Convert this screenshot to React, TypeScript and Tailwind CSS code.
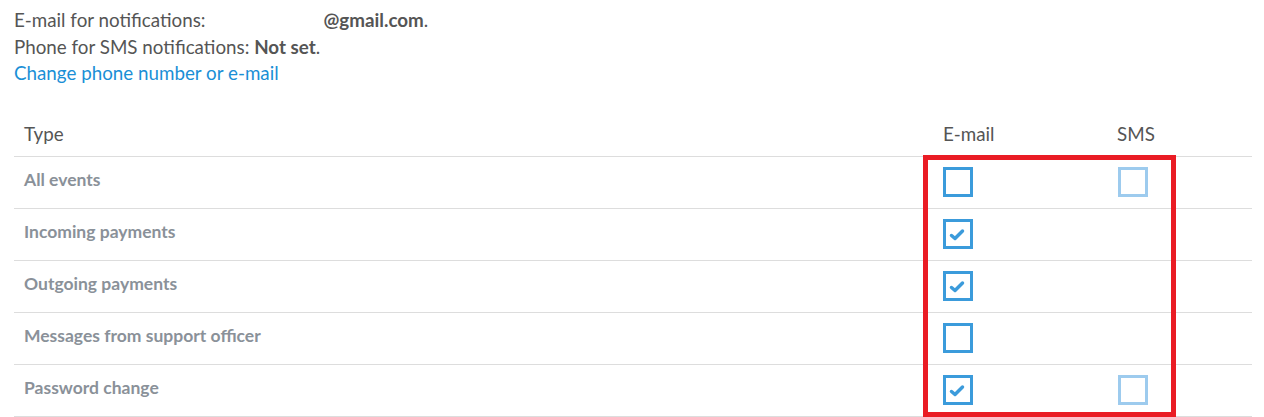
import React from 'react';

const rows = [
  { label: 'All events', email: false, sms: false },
  { label: 'Incoming payments', email: true, sms: null },
  { label: 'Outgoing payments', email: true, sms: null },
  { label: 'Messages from support officer', email: false, sms: null },
  { label: 'Password change', email: true, sms: false },
];

function Box({ checked, light }: { checked: boolean; light?: boolean }) {
  return (
    <div
      className={
        'w-[30px] h-[30px] border-[3px] bg-white flex items-center justify-center ' +
        (light ? 'border-[#9dcbee]' : 'border-[#3b9bdb]')
      }
    >
      {checked && (
        <svg width="16" height="14" viewBox="0 0 16 14" className="mr-[3px] mt-[2px]">
          <path d="M2.5 7.5 L6 10.5 L13.5 3" fill="none" stroke="#3b9bdb" strokeWidth="3.5" strokeLinecap="round" strokeLinejoin="round" />
        </svg>
      )}
    </div>
  );
}

export default function App() {
  return (
    <div className="bg-white w-[1264px] h-[417px] overflow-hidden px-[14px] pt-[7px] text-[18.8px] text-[#555] font-['Lato',sans-serif]">
      <div className="leading-[26.5px]">
        <div>
          E-mail for notifications:
          <span className="inline-block w-[118px]"></span>
          <b className="font-bold">@gmail.com</b>.
        </div>
        <div>
          Phone for SMS notifications: <b className="font-bold">Not set</b>.
        </div>
        <div className="text-[#1a8fd6]">Change phone number or e-mail</div>
      </div>

      <div className="mt-[23px] w-[1238px]">
        <div className="flex items-center h-[47px] pt-[3px] border-b border-[#dddddd] text-[18.8px]">
          <div className="flex-1 pl-[10px]">Type</div>
          <div className="w-[175px] pl-[10px]">E-mail</div>
          <div className="w-[144px] pl-[9px]">SMS</div>
        </div>
        <div className="relative">
          {rows.map((r) => (
            <div key={r.label} className="flex items-center h-[52px] border-b border-[#dddddd]">
              <div className="flex-1 pl-[10px] font-bold text-[17.5px] text-[#8a9199] pb-[3px]">{r.label}</div>
              <div className="w-[175px] pl-[10px]">
                <Box checked={r.email} />
              </div>
              <div className="w-[144px] pl-[10px]">{r.sms !== null && <Box checked={r.sms} light />}</div>
            </div>
          ))}
          <div className="absolute left-[909px] top-[-2px] w-[253px] h-[262px] border-[5px] border-[#ea1c24] pointer-events-none"></div>
        </div>
      </div>
    </div>
  );
}
